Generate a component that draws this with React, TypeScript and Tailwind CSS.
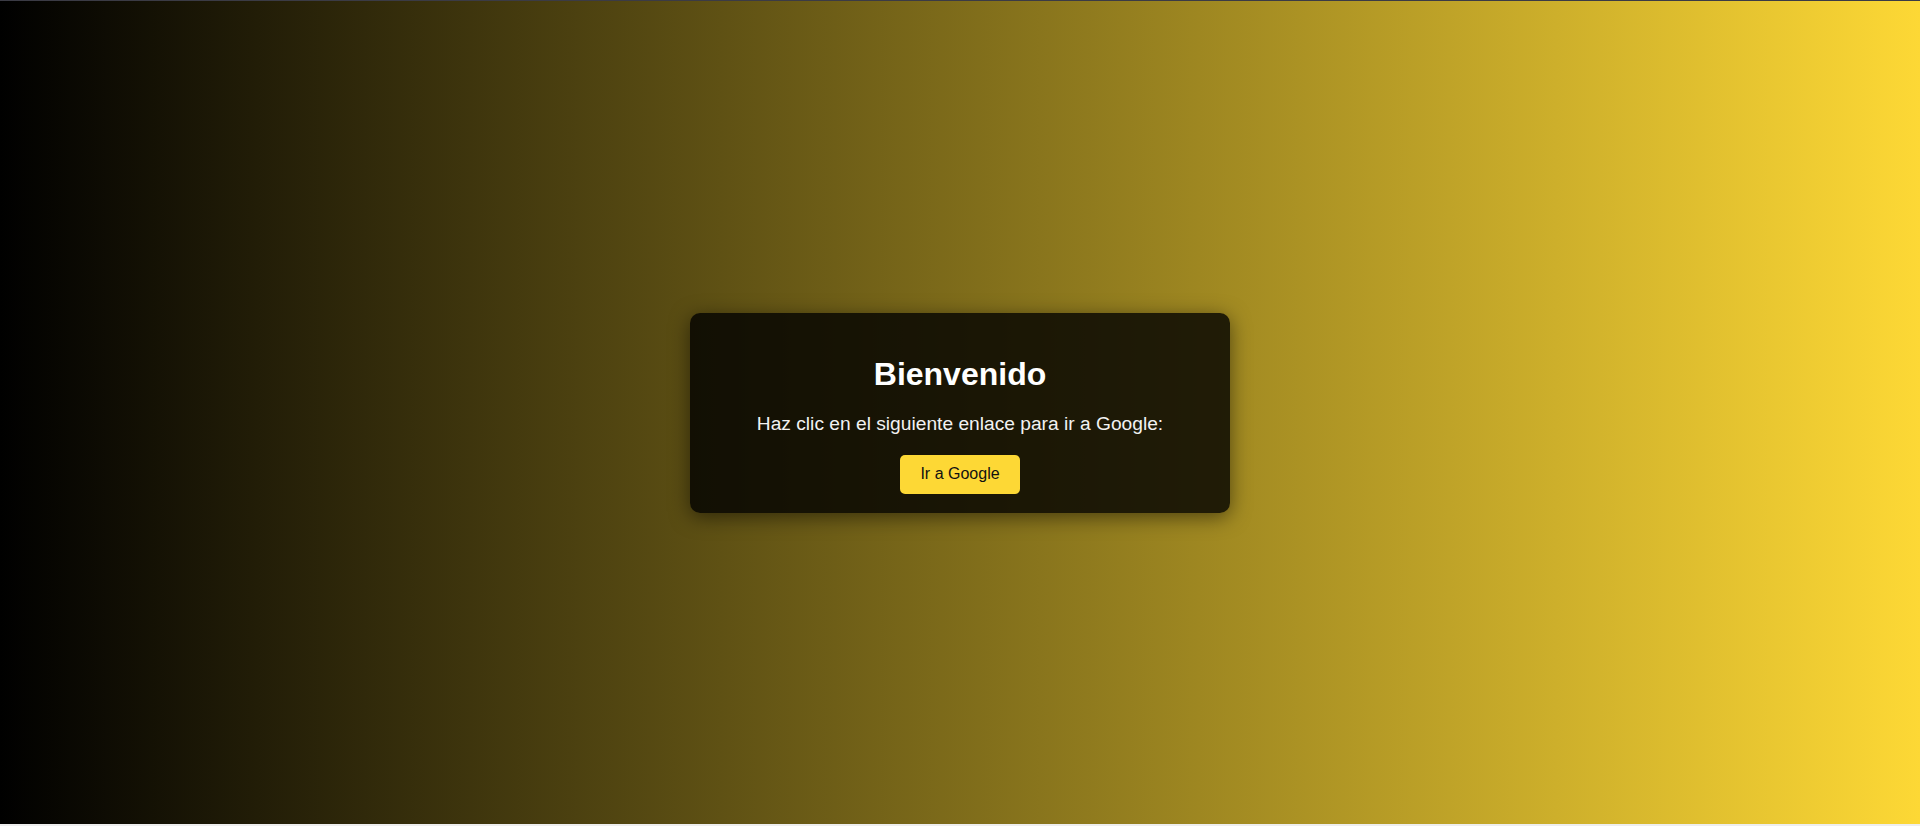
import React from 'react';

const App: React.FC = () => {
  return (
    <div className="w-full h-[826px] flex flex-col bg-[#eeeeee] font-['Liberation_Sans',Arial,sans-serif]">
      <div className="h-px bg-[#3b3b45]" />
      <div className="h-[823px] flex items-center justify-center bg-[linear-gradient(to_right,#000000,#fdd835)]">
        <div className="w-[540px] h-[200px] rounded-[10px] bg-black/80 shadow-[0_4px_20px_rgba(0,0,0,0.5)] flex flex-col items-center pt-[43px]">
          <h1 className="text-[32px] leading-[37px] font-bold text-white">Bienvenido</h1>
          <p className="mt-[20px] text-[19.2px] leading-[22px] text-[#f2f2f2]">
            Haz clic en el siguiente enlace para ir a Google:
          </p>
          <a
            href="#"
            className="mt-[20px] h-[39px] px-5 flex items-center rounded-[5px] bg-[#fdd835] text-[16px] text-[#111111]"
          >
            Ir a Google
          </a>
        </div>
      </div>
    </div>
  );
};

export default App;
